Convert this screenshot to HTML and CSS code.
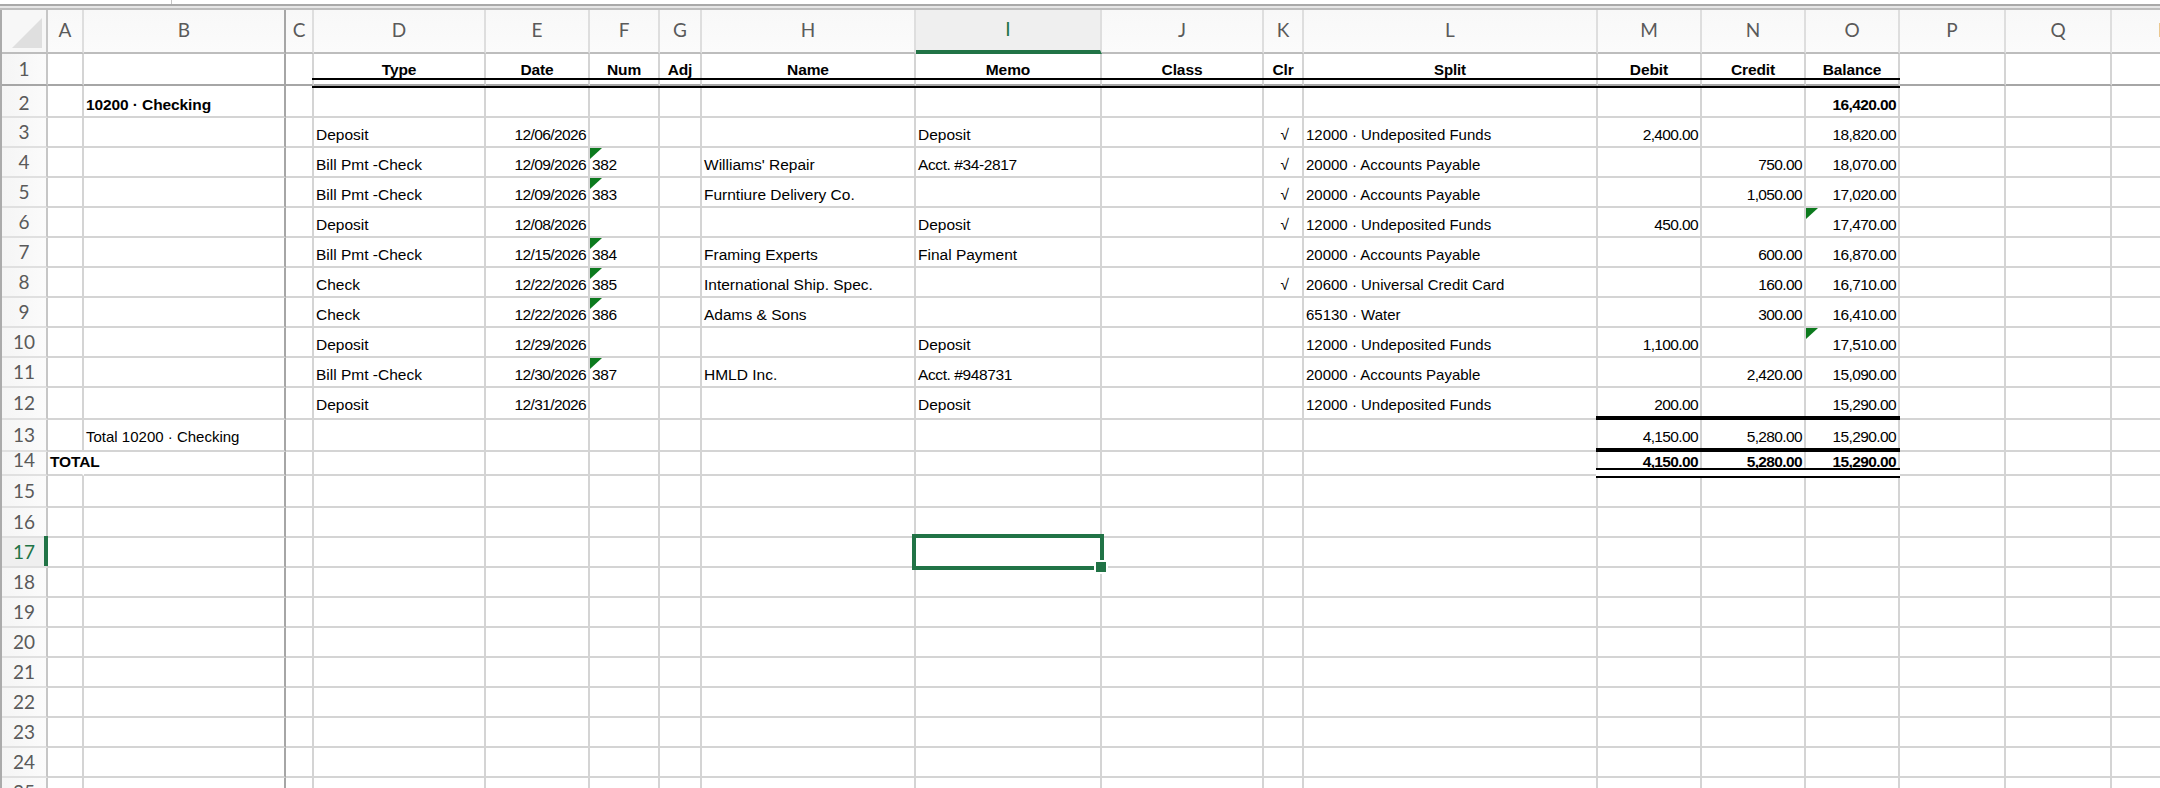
FILE: index.html
```html
<!DOCTYPE html>
<html lang="en">
<head>
<meta charset="utf-8">
<title>10200 · Checking</title>
<link rel="stylesheet" href="styles.css">
</head>
<body>
<div class="window">
  <div class="formula-edge"><div class="name-box"></div></div>
  <div class="sheet">
    <svg class="edge-marks" width="2" height="788" viewBox="0 0 2 788" aria-hidden="true">
      <path d="M1 52v3M1 60v3M1 67v4M1 243v10M1 255v3M1 260v3M1 270v2M1 331v4M1 390v2M1 480v27M1 577v2M1 587v3M1 663v24M1 690v2M1 707v2"/>
    </svg>
    <table class="grid">
      <colgroup>
        <col class="w-hdr"><col class="w-a"><col class="w-b"><col class="w-c"><col class="w-d"><col class="w-e"><col class="w-f"><col class="w-g"><col class="w-h"><col class="w-i"><col class="w-j"><col class="w-k"><col class="w-l"><col class="w-m"><col class="w-n"><col class="w-o"><col class="w-p"><col class="w-q"><col class="w-r">
      </colgroup>
      <thead>
        <tr class="col-head">
          <th class="corner"><svg width="44" height="42" viewBox="0 0 44 42" aria-hidden="true"><path d="M10 38H40V8Z"/></svg></th>
          <th>A</th><th>B</th><th>C</th><th>D</th><th>E</th><th>F</th><th>G</th><th>H</th><th class="active">I</th><th>J</th><th>K</th><th>L</th><th>M</th><th>N</th><th>O</th><th>P</th><th>Q</th><th>R</th>
        </tr>
      </thead>
      <tbody>
        <tr class="r32 frozen"><th>1</th><td></td><td></td><td></td><td class="h dbl">Type</td><td class="h dbl">Date</td><td class="h dbl">Num</td><td class="h dbl">Adj</td><td class="h dbl">Name</td><td class="h dbl">Memo</td><td class="h dbl">Class</td><td class="h dbl">Clr</td><td class="h dbl">Split</td><td class="h dbl">Debit</td><td class="h dbl">Credit</td><td class="h dbl">Balance</td><td></td><td></td><td></td></tr>
        <tr class="r32 low"><th>2</th><td></td><td class="b">10200 · Checking</td><td></td><td></td><td></td><td></td><td></td><td></td><td></td><td></td><td></td><td></td><td></td><td></td><td class="n b">16,420.00</td><td></td><td></td><td></td></tr>
        <tr class="r30"><th>3</th><td></td><td></td><td></td><td>Deposit</td><td class="n">12/06/2026</td><td></td><td></td><td></td><td>Deposit</td><td></td><td class="k">√</td><td>12000 · Undeposited Funds</td><td class="n">2,400.00</td><td></td><td class="n">18,820.00</td><td></td><td></td><td></td></tr>
        <tr class="r30"><th>4</th><td></td><td></td><td></td><td>Bill Pmt -Check</td><td class="n">12/09/2026</td><td class="tri t">382</td><td></td><td>Williams' Repair</td><td class="t">Acct. #34-2817</td><td></td><td class="k">√</td><td>20000 · Accounts Payable</td><td></td><td class="n">750.00</td><td class="n">18,070.00</td><td></td><td></td><td></td></tr>
        <tr class="r30"><th>5</th><td></td><td></td><td></td><td>Bill Pmt -Check</td><td class="n">12/09/2026</td><td class="tri t">383</td><td></td><td>Furntiure Delivery Co.</td><td></td><td></td><td class="k">√</td><td>20000 · Accounts Payable</td><td></td><td class="n">1,050.00</td><td class="n">17,020.00</td><td></td><td></td><td></td></tr>
        <tr class="r30"><th>6</th><td></td><td></td><td></td><td>Deposit</td><td class="n">12/08/2026</td><td></td><td></td><td></td><td>Deposit</td><td></td><td class="k">√</td><td>12000 · Undeposited Funds</td><td class="n">450.00</td><td></td><td class="n tri">17,470.00</td><td></td><td></td><td></td></tr>
        <tr class="r30"><th>7</th><td></td><td></td><td></td><td>Bill Pmt -Check</td><td class="n">12/15/2026</td><td class="tri t">384</td><td></td><td>Framing Experts</td><td>Final Payment</td><td></td><td></td><td>20000 · Accounts Payable</td><td></td><td class="n">600.00</td><td class="n">16,870.00</td><td></td><td></td><td></td></tr>
        <tr class="r30"><th>8</th><td></td><td></td><td></td><td>Check</td><td class="n">12/22/2026</td><td class="tri t">385</td><td></td><td>International Ship. Spec.</td><td></td><td></td><td class="k">√</td><td>20600 · Universal Credit Card</td><td></td><td class="n">160.00</td><td class="n">16,710.00</td><td></td><td></td><td></td></tr>
        <tr class="r30"><th>9</th><td></td><td></td><td></td><td>Check</td><td class="n">12/22/2026</td><td class="tri t">386</td><td></td><td>Adams &amp; Sons</td><td></td><td></td><td></td><td>65130 · Water</td><td></td><td class="n">300.00</td><td class="n">16,410.00</td><td></td><td></td><td></td></tr>
        <tr class="r30"><th>10</th><td></td><td></td><td></td><td>Deposit</td><td class="n">12/29/2026</td><td></td><td></td><td></td><td>Deposit</td><td></td><td></td><td>12000 · Undeposited Funds</td><td class="n">1,100.00</td><td></td><td class="n tri">17,510.00</td><td></td><td></td><td></td></tr>
        <tr class="r30"><th>11</th><td></td><td></td><td></td><td>Bill Pmt -Check</td><td class="n">12/30/2026</td><td class="tri t">387</td><td></td><td>HMLD Inc.</td><td class="t">Acct. #948731</td><td></td><td></td><td>20000 · Accounts Payable</td><td></td><td class="n">2,420.00</td><td class="n">15,090.00</td><td></td><td></td><td></td></tr>
        <tr class="r32 tall"><th>12</th><td></td><td></td><td></td><td>Deposit</td><td class="n">12/31/2026</td><td></td><td></td><td></td><td>Deposit</td><td></td><td></td><td>12000 · Undeposited Funds</td><td class="n rule">200.00</td><td class="rule"></td><td class="n rule">15,290.00</td><td></td><td></td><td></td></tr>
        <tr class="r32 tall"><th>13</th><td></td><td class="s">Total 10200 · Checking</td><td></td><td></td><td></td><td></td><td></td><td></td><td></td><td></td><td></td><td></td><td class="n rule">4,150.00</td><td class="n rule">5,280.00</td><td class="n rule">15,290.00</td><td></td><td></td><td></td></tr>
        <tr class="r24 raised"><th>14</th><td class="b spill">TOTAL</td><td></td><td></td><td></td><td></td><td></td><td></td><td></td><td></td><td></td><td></td><td></td><td class="n b dbl2">4,150.00</td><td class="n b dbl2">5,280.00</td><td class="n b dbl2">15,290.00</td><td></td><td></td><td></td></tr>
        <tr class="r32"><th>15</th><td></td><td></td><td></td><td></td><td></td><td></td><td></td><td></td><td></td><td></td><td></td><td></td><td></td><td></td><td></td><td></td><td></td><td></td></tr>
        <tr class="r30"><th>16</th><td></td><td></td><td></td><td></td><td></td><td></td><td></td><td></td><td></td><td></td><td></td><td></td><td></td><td></td><td></td><td></td><td></td><td></td></tr>
        <tr class="r30"><th class="active">17</th><td></td><td></td><td></td><td></td><td></td><td></td><td></td><td></td><td class="selected"></td><td></td><td></td><td></td><td></td><td></td><td></td><td></td><td></td><td></td></tr>
        <tr class="r30"><th>18</th><td></td><td></td><td></td><td></td><td></td><td></td><td></td><td></td><td></td><td></td><td></td><td></td><td></td><td></td><td></td><td></td><td></td><td></td></tr>
        <tr class="r30"><th>19</th><td></td><td></td><td></td><td></td><td></td><td></td><td></td><td></td><td></td><td></td><td></td><td></td><td></td><td></td><td></td><td></td><td></td><td></td></tr>
        <tr class="r30"><th>20</th><td></td><td></td><td></td><td></td><td></td><td></td><td></td><td></td><td></td><td></td><td></td><td></td><td></td><td></td><td></td><td></td><td></td><td></td></tr>
        <tr class="r30"><th>21</th><td></td><td></td><td></td><td></td><td></td><td></td><td></td><td></td><td></td><td></td><td></td><td></td><td></td><td></td><td></td><td></td><td></td><td></td></tr>
        <tr class="r30"><th>22</th><td></td><td></td><td></td><td></td><td></td><td></td><td></td><td></td><td></td><td></td><td></td><td></td><td></td><td></td><td></td><td></td><td></td><td></td></tr>
        <tr class="r30"><th>23</th><td></td><td></td><td></td><td></td><td></td><td></td><td></td><td></td><td></td><td></td><td></td><td></td><td></td><td></td><td></td><td></td><td></td><td></td></tr>
        <tr class="r30"><th>24</th><td></td><td></td><td></td><td></td><td></td><td></td><td></td><td></td><td></td><td></td><td></td><td></td><td></td><td></td><td></td><td></td><td></td><td></td></tr>
        <tr class="r30"><th>25</th><td></td><td></td><td></td><td></td><td></td><td></td><td></td><td></td><td></td><td></td><td></td><td></td><td></td><td></td><td></td><td></td><td></td><td></td></tr>
      </tbody>
    </table>
  </div>
</div>
</body>
</html>
```
FILE: styles.css
```css
* { box-sizing: border-box; }
html, body { margin: 0; height: 100%; background: #fff; overflow: hidden; }

.window { width: 2160px; height: 788px; display: flex; flex-direction: column; overflow: hidden; }

.formula-edge {
  height: 10px;
  flex: none;
  border-bottom: 2px solid #bdbdbd;
  background: linear-gradient(#fff 0 4px, #a9a9a9 4px 6px, #e6e6e6 6px 8px);
}
.name-box {
  width: 172px;
  height: 4px;
  background: #fff;
  border-right: 1px solid #c4c4c4;
}

.sheet {
  position: relative;
  flex: 1;
  min-height: 0;
  overflow: hidden;
  border-left: 2px solid #ababab;
}
.edge-marks { position: absolute; left: -2px; top: -10px; z-index: 5; overflow: visible; }
.edge-marks path { stroke: #222; stroke-width: 2; fill: none; }

.grid {
  border-collapse: separate;
  border-spacing: 0;
  table-layout: fixed;
  width: 2216px;
  font: 15.5px/18px "Liberation Sans", Arial, sans-serif;
  color: #000;
}

.w-hdr { width: 46px; }
.w-a { width: 36px; }
.w-b { width: 202px; }
.w-c { width: 28px; }
.w-d { width: 172px; }
.w-e { width: 104px; }
.w-f { width: 70px; }
.w-g { width: 42px; }
.w-h { width: 214px; }
.w-i { width: 186px; }
.w-j { width: 162px; }
.w-k { width: 40px; }
.w-l { width: 294px; }
.w-m { width: 104px; }
.w-n { width: 104px; }
.w-o { width: 94px; }
.w-p { width: 106px; }
.w-q { width: 106px; }
.w-r { width: 106px; }

/* column header strip */
.col-head { height: 44px; }
.col-head th {
  padding: 0 0 3px;
  font: 400 19px/22px Lato, "Open Sans", sans-serif;
  color: #5a5a5a;
  text-align: center;
  vertical-align: middle;
  background: linear-gradient(#f8f8f8, #fbfbfb);
  border-right: 2px solid #dedede;
  border-bottom: 2px solid #bdbdbd;
}
.col-head th:nth-child(3) { border-right-color: #a6a6a6; }
.col-head .corner { padding: 0; border-right-color: #c6c6c6; background: #f7f7f7; line-height: 0; }
.corner svg { display: block; }
.corner path { fill: #dfdfdf; }
.col-head .active {
  color: #217346;
  background: #efefef;
  border-bottom: 4px solid #217346;
}

/* row rhythm */
.r24 { height: 24px; }
.r30 { height: 30px; }
.r32 { height: 32px; }

/* row header */
tbody th {
  padding: 0;
  font: 400 19px/22px Lato, "Open Sans", sans-serif;
  color: #5a5a5a;
  text-align: center;
  vertical-align: middle;
  background: linear-gradient(90deg, #f5f5f5, #fbfbfb);
  border-right: 2px solid #c6c6c6;
  border-bottom: 2px solid #e0e0e0;
}
.low th { padding-top: 4px; }
.raised th { padding-bottom: 6px; line-height: 16px; }
tbody th.active { position: relative; color: #217346; background: #efefef; }
tbody th.active::after {
  content: "";
  position: absolute;
  top: -2px;
  right: -2px;
  bottom: 0;
  width: 4px;
  background: #217346;
}

/* cells */
td {
  padding: 0 2px 2px;
  vertical-align: bottom;
  white-space: nowrap;
  border-right: 2px solid #d4d4d4;
  border-bottom: 2px solid #d4d4d4;
}
td:nth-child(13) { font-size: 15px; }
tbody tr > :nth-child(3) { border-right-color: #a6a6a6; }
.frozen > * { border-bottom-color: #a6a6a6; }
.tall td { padding-bottom: 4px; }
.raised td { padding-bottom: 3px; }

.b { font-weight: 700; letter-spacing: -.1px; }
.s { font-size: 15px; }
.n { text-align: right; letter-spacing: -.62px; }
.t { letter-spacing: -.4px; }
.k { text-align: right; padding-right: 13px; }
.h { position: relative; font-weight: 700; text-align: center; padding-bottom: 5px; letter-spacing: -.1px; }
.spill { border-right-color: transparent; }

/* green error triangles */
.tri { position: relative; }
.tri::before {
  content: "";
  position: absolute;
  left: 0;
  top: 0;
  width: 12px;
  height: 11px;
  background: #0c7a1e;
  clip-path: polygon(0 0, 100% 0, 0 100%);
}

/* accounting rules */
.dbl::after, .dbl2::after, .rule::after {
  content: "";
  position: absolute;
  left: -2px;
  right: -2px;
  z-index: 1;
}
.dbl::after {
  bottom: -4px;
  height: 6px;
  border-top: 2px solid #000;
  border-bottom: 2px solid #000;
}
.rule, .dbl2 { position: relative; }
.rule::after {
  bottom: -2px;
  height: 4px;
  background: #000;
}
.dbl2::after {
  bottom: -4px;
  height: 6px;
  background: #fff;
  border-top: 2px solid #000;
  border-bottom: 2px solid #000;
}

/* selected cell */
.selected { position: relative; }
.selected::after {
  content: "";
  position: absolute;
  inset: -4px;
  border: 4px solid #217346;
  z-index: 2;
}
.selected::before {
  content: "";
  position: absolute;
  right: -6px;
  bottom: -6px;
  width: 10px;
  height: 10px;
  background: #217346;
  box-shadow: 0 0 0 2px #fff;
  z-index: 3;
}
```
